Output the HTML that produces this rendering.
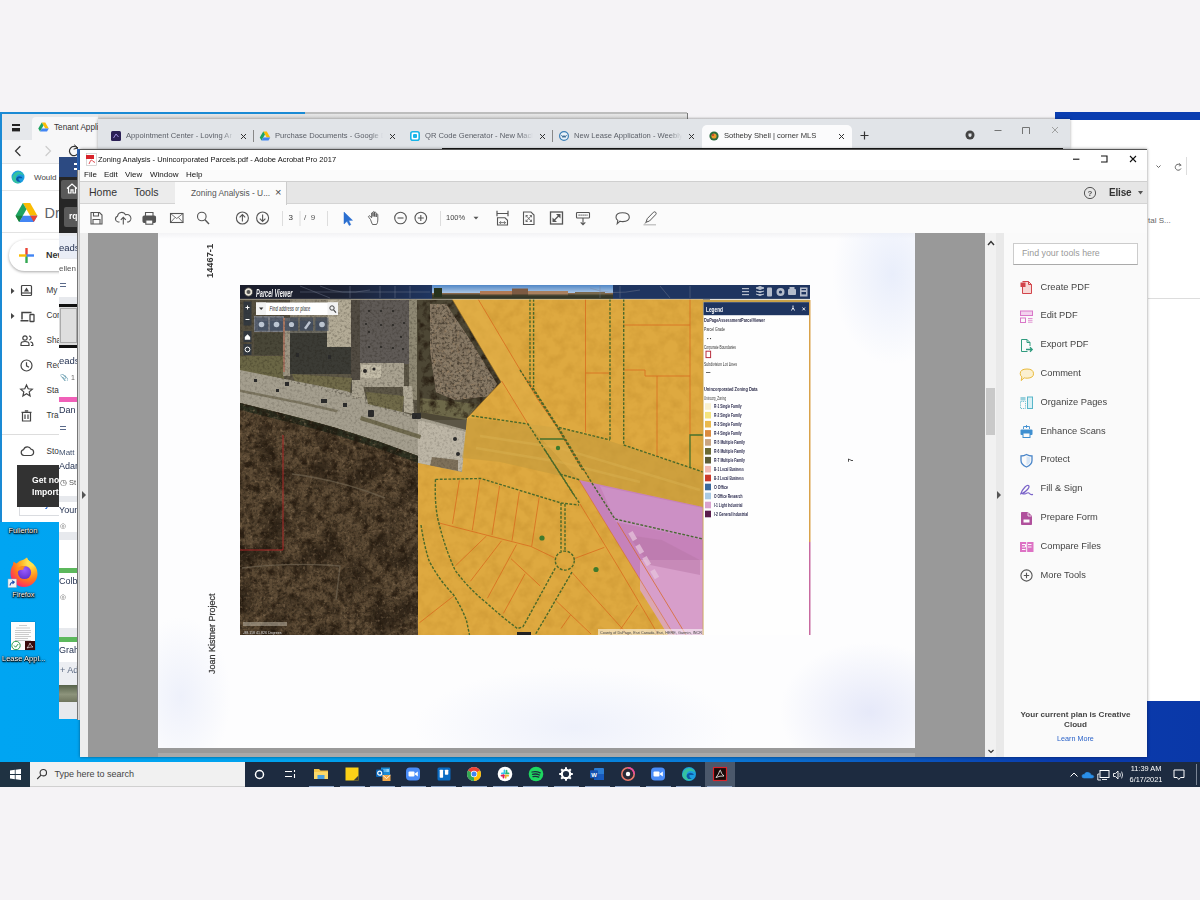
<!DOCTYPE html>
<html><head><meta charset="utf-8"><title>Zoning Analysis</title>
<style>
*{box-sizing:border-box;margin:0;padding:0}
html,body{width:1200px;height:900px;overflow:hidden;background:#f5f3f6;font-family:"Liberation Sans",sans-serif;}
.a{position:absolute}
.t{position:absolute;white-space:nowrap;line-height:1;color:#333}
svg{position:absolute;overflow:visible}
#wrap{position:absolute;left:0;top:0;width:1200px;height:900px;filter:blur(.45px)}
</style></head><body><div id="wrap">
<!-- DESKTOP -->
<div class="a" id="desk" style="left:0;top:112px;width:1200px;height:651px;background:linear-gradient(90deg,#00a5f2 0%,#00a2ee 25%,#0a78d6 60%,#0a3cae 88%,#0a38a8 100%)"></div>

<!-- desktop icons -->
<div class="t" style="left:8.5px;top:527px;font-size:7.4px;color:#fff;text-shadow:0 0 1px #000,0 1px 1px #000,1px 1px 2px #000,0 0 2px #000">Fullerton</div>
<svg style="left:8px;top:557px" width="32" height="32" viewBox="0 0 32 32"><defs><radialGradient id="ffg" cx=".72" cy=".18" r=".95"><stop offset="0" stop-color="#fff36a"/><stop offset=".3" stop-color="#ffbd2a"/><stop offset=".6" stop-color="#ff7a1c"/><stop offset=".85" stop-color="#ff3a55"/><stop offset="1" stop-color="#e31587"/></radialGradient><radialGradient id="ffp" cx=".5" cy=".3" r=".8"><stop offset="0" stop-color="#9a5cff"/><stop offset="1" stop-color="#5a2ac8"/></radialGradient></defs><path d="M16 2.500 Q18 1 19 0.500 Q19.500 3 22 4.500 Q29.500 9 29.500 16.500 A13.500 13.500 0 0 1 2.500 16.500 Q2.500 11 5 8 Q5 5.500 5.800 4.500 Q7 6.200 8.500 6.500 Q11 3.500 16 2.500Z" fill="url(#ffg)"/><circle cx="16.500" cy="15.500" r="6.600" fill="url(#ffp)"/><path d="M8.500 12.500 Q11.500 8 17.500 9.200 Q14.800 10.600 15.300 13 Q12 12 9.500 14.500 Q8.500 13.500 8.500 12.500Z" fill="#ff8a1c"/><path d="M19 0.500 Q19.500 3 22 4.500 Q25.500 7 26.500 10 Q23.500 7.500 20.500 8 Q20.500 4 19 0.500Z" fill="#ffe14a"/><rect x="0" y="22" width="8.500" height="8.500" fill="#f4f4f4" stroke="#9ab" stroke-width=".5"/><path d="M2 28.500 Q2.500 25 6 25 M4 23.600 L6.300 25 L4.500 27" stroke="#1a4ab0" stroke-width="1.100" fill="none"/></svg>
<div class="t" style="left:12.3px;top:591px;font-size:7.2px;color:#fff;text-shadow:0 0 1px #000,0 1px 1px #000,1px 1px 2px #000,0 0 2px #000">Firefox</div>
<div class="a" style="left:11px;top:622px;width:24px;height:28px;background:#fdfdfd;box-shadow:0 0 1px rgba(0,0,0,.5)"></div>
<svg style="left:11px;top:622px" width="24" height="28" viewBox="0 0 24 28"><g stroke="#999" stroke-width=".5"><path d="M8 3.500 H16 M5 6 H19 M4 8.500 H20 M4 10.500 H20 M4 12.500 H18 M4 14.500 H20 M4 16.500 H17 M4 18.500 H20"/></g><circle cx="5" cy="23.500" r="4.200" fill="#fff" stroke="#2a9a4a" stroke-width="1"/><path d="M3 23.500 L4.600 25.200 L7.200 22" stroke="#2a9a4a" stroke-width="1" fill="none"/><rect x="14" y="19" width="10" height="9" fill="#3a0a0a"/><path d="M16 26 Q18.500 23 19 21 Q19.500 23.500 22 25 Q19 24.800 16 26Z" stroke="#fff" stroke-width=".6" fill="none"/></svg>
<div class="t" style="left:2px;top:654.5px;font-size:7.5px;color:#fff;text-shadow:0 0 1px #000,0 1px 1px #000,1px 1px 2px #000,0 0 2px #000">Lease Appl...</div>
<div class="a" style="left:687px;top:112px;width:368px;height:8px;background:linear-gradient(#f5f3f6 60%,#d8d8da)"></div>
<div class="a" style="left:687px;top:113px;width:1px;height:6px;background:#777"></div>
<!-- RIGHT WINDOW -->
<div class="a" style="left:1055px;top:112px;width:145px;height:8px;background:#0a3db0"></div>
<div class="a" style="left:1070px;top:120px;width:130px;height:581px;background:#fff"></div>
<div class="a" style="left:1148px;top:298px;width:52px;height:1px;background:#ddd"></div>
<div class="a" style="left:1186px;top:157px;width:1px;height:18px;background:#ddd"></div>
<div class="t" style="left:1148px;top:217px;font-size:8px;color:#666">tal S...</div>
<svg style="left:1154px;top:162px" width="30" height="10" viewBox="0 0 30 10"><path d="M2.5 3.5 L4.5 5.5 L6.5 3.5" stroke="#666" stroke-width="1" fill="none"/><path d="M26.5 3.2 A3 3 0 1 0 27 6.5" stroke="#666" stroke-width="1" fill="none"/><path d="M25 1.2 L27.2 3.2 L24.8 4" stroke="#666" stroke-width=".8" fill="none"/></svg>

<!-- EDGE WINDOW (Drive) -->
<div class="a" id="edge" style="left:0;top:112px;width:687px;height:410px;background:#fff;border-left:2px solid #1a8ad4"></div>
<div class="a" style="left:0;top:112px;width:305px;height:1.5px;background:#1a8ad4"></div>
<div class="a" style="left:305px;top:112px;width:382px;height:1.5px;background:#bdbdbd"></div>
<div class="a" style="left:2px;top:113.5px;width:685px;height:26px;background:#e6e8eb"></div>
<div class="a" style="left:32px;top:117px;width:68px;height:23px;background:#f7f7f8;border-radius:4px 4px 0 0"></div>
<svg style="left:10px;top:122px" width="12" height="12" viewBox="0 0 12 12"><rect x="2" y="2" width="8" height="2" fill="#222"/><rect x="2" y="6" width="8" height="3.4" fill="#222"/></svg>
<svg style="left:38px;top:122px" width="11" height="10" viewBox="0 0 22 20"><path d="M7.5 1 H14.5 L21.5 13 H14.5Z" fill="#fbbc04"/><path d="M7.5 1 L0.5 13 L4 19 L11 7Z" fill="#1ea362"/><path d="M4 19 H18 L21.5 13 H7.5Z" fill="#4285f4"/></svg>
<div class="t" style="left:54px;top:124px;font-size:8.2px;color:#333">Tenant Applic</div>
<div class="a" style="left:2px;top:139.5px;width:100px;height:24px;background:#f7f7f8"></div>
<svg style="left:10px;top:142px" width="75" height="18" viewBox="0 0 75 18" fill="none" stroke-linecap="round"><path d="M10 4.5 L5.5 9 L10 13.5" stroke="#333" stroke-width="1.2"/><path d="M36 4.5 L40.5 9 L36 13.5" stroke="#ccc" stroke-width="1.2"/><path d="M67.5 6 A4.6 4.6 0 1 0 68.2 11" stroke="#333" stroke-width="1.2"/><path d="M64.5 3 L68 6 L64 7" stroke="#333" stroke-width="1"/></svg>
<div class="a" style="left:2px;top:163px;width:100px;height:1px;background:#e2e2e2"></div>
<svg style="left:11px;top:170px" width="14" height="14" viewBox="0 0 14 14"><circle cx="7" cy="7" r="6.5" fill="#1b9de2"/><path d="M1 8 Q2 2.5 7.5 1.5 Q12 2 13.2 6 Q11 3.6 7.5 4.6 Q4.5 6 5 9.5 Q6 12.8 10.5 12 Q5 15 1.6 10.5Z" fill="#35c1a0"/><path d="M5 9.5 Q5.2 6.5 8.5 6.2 Q11 6.4 11.6 8.2 H7.4 Q7 10.5 9.6 11.6 Q6 12.6 5 9.5Z" fill="#0c59a4"/></svg>
<div class="t" style="left:34px;top:173.5px;font-size:8px;color:#444">Would</div>
<div class="a" style="left:2px;top:190px;width:100px;height:1px;background:#e6e6e6"></div>
<svg style="left:15px;top:202px" width="23" height="21" viewBox="0 0 22 20"><path d="M7.5 1 H14.5 L21.5 13 H14.5Z" fill="#fbbc04"/><path d="M7.5 1 L0.5 13 L4 19 L11 7Z" fill="#1ea362"/><path d="M4 19 H18 L21.5 13 H7.5Z" fill="#4285f4"/><path d="M11 7 L7.5 13 H14.5Z" fill="#fff" opacity=".0"/><path d="M4 19 L7.5 13 L0.5 13Z" fill="#188038"/><path d="M18 19 L21.5 13 H14.5Z" fill="#ea4335"/></svg>
<div class="t" style="left:44.5px;top:205.5px;font-size:14.5px;color:#5f6368">Dr</div>
<div class="a" style="left:2px;top:232px;width:100px;height:1px;background:#e2e2e2"></div>
<div class="a" style="left:8.5px;top:240px;width:80px;height:31px;background:#fff;border-radius:16px;box-shadow:0 1px 3px rgba(0,0,0,.35)"></div>
<svg style="left:18.5px;top:248px" width="15" height="15" viewBox="0 0 15 15"><rect x="6.3" y="0" width="2.4" height="7.5" fill="#ea4335"/><rect x="6.3" y="7.5" width="2.4" height="7.5" fill="#34a853"/><rect x="0" y="6.3" width="7.5" height="2.4" fill="#fbbc04"/><rect x="7.5" y="6.3" width="7.5" height="2.4" fill="#4285f4"/></svg>
<div class="t" style="left:46px;top:251px;font-size:9px;color:#333;font-weight:bold">New</div>
<svg style="left:19.5px;top:284.0px" width="15" height="13" viewBox="0 0 15 13" fill="none" stroke="#444" stroke-width="1.2"><rect x="1.5" y="1.5" width="10" height="10" rx="1"/><path d="M1.5 9 H11.5" /><path d="M6.5 3.5 L9 7.5 H4Z" fill="#444" stroke="none"/></svg>
<svg style="left:10.5px;top:287.5px" width="4" height="6" viewBox="0 0 4 6"><path d="M0 0 L3.5 3 L0 6Z" fill="#444"/></svg>
<div class="t" style="left:46.5px;top:286.5px;font-size:8.2px;color:#333">My</div>
<svg style="left:19.5px;top:309.5px" width="15" height="13" viewBox="0 0 15 13" fill="none" stroke="#444" stroke-width="1.2"><path d="M2 9.5 V2.5 H11.5 M0.5 10.8 H8.5" stroke-width="1.5"/><rect x="10" y="4.5" width="4" height="7" rx=".6" stroke-width="1.3"/></svg>
<svg style="left:10.5px;top:313.0px" width="4" height="6" viewBox="0 0 4 6"><path d="M0 0 L3.5 3 L0 6Z" fill="#444"/></svg>
<div class="t" style="left:46.5px;top:312.0px;font-size:8.2px;color:#333">Com</div>
<svg style="left:19.5px;top:334.1px" width="15" height="13" viewBox="0 0 15 13" fill="none" stroke="#444" stroke-width="1.2"><circle cx="5" cy="4" r="2.2"/><path d="M1 11.5 V10 Q1 7.5 5 7.5 Q9 7.5 9 10 V11.5Z"/><path d="M9 2 Q11.2 2.4 11 4.2 Q10.8 5.8 9 6 M10.5 7.8 Q12.8 8.3 12.8 10 V11.5 H11"/></svg>
<div class="t" style="left:46.5px;top:336.6px;font-size:8.2px;color:#333">Sha</div>
<svg style="left:19.5px;top:359.2px" width="15" height="13" viewBox="0 0 15 13" fill="none" stroke="#444" stroke-width="1.2"><circle cx="6.5" cy="6.5" r="5.5"/><path d="M6.5 3.2 V6.8 L9 8.3"/></svg>
<div class="t" style="left:46.5px;top:361.7px;font-size:8.2px;color:#333">Rec</div>
<svg style="left:19.5px;top:384.2px" width="15" height="13" viewBox="0 0 15 13" fill="none" stroke="#444" stroke-width="1.2"><path d="M6.5 1 L8.2 4.8 L12.3 5.2 L9.2 7.9 L10.1 12 L6.5 9.8 L2.9 12 L3.8 7.9 L0.7 5.2 L4.8 4.8Z"/></svg>
<div class="t" style="left:46.5px;top:386.7px;font-size:8.2px;color:#333">Sta</div>
<svg style="left:19.5px;top:409.0px" width="15" height="13" viewBox="0 0 15 13" fill="none" stroke="#444" stroke-width="1.2"><path d="M2.5 3.5 H10.5 V12 H2.5Z M1.5 3.3 H11.5 M4.8 1.8 H8.2 M5 5.5 V10 M8 5.5 V10" /></svg>
<div class="t" style="left:46.5px;top:411.5px;font-size:8.2px;color:#333">Tra</div>
<svg style="left:19.5px;top:445.3px" width="15" height="13" viewBox="0 0 15 13" fill="none" stroke="#444" stroke-width="1.2"><path d="M3.8 10.5 A3 3 0 0 1 3.6 4.6 A4 4 0 0 1 11 4.2 A3.2 3.2 0 0 1 11 10.5Z"/></svg>
<div class="t" style="left:46.5px;top:447.8px;font-size:8.2px;color:#333">Sto</div>

<div class="a" style="left:2px;top:433.5px;width:60px;height:1px;background:#ddd"></div>
<div class="a" style="left:19px;top:503px;width:45px;height:13px;border:1px solid #dadce0;background:#fff"></div>
<div class="t" style="left:34px;top:501px;font-size:8px;color:#1a5fd0;font-weight:bold">Buy s</div>
<div class="a" style="left:17px;top:465px;width:45px;height:41.5px;background:#323232"></div>
<div class="t" style="left:32px;top:475.5px;font-size:8.6px;color:#fff;font-weight:bold">Get noti</div>
<div class="t" style="left:32px;top:487.5px;font-size:8.6px;color:#fff;font-weight:bold">Importa</div>
<!-- CHROME WINDOW -->
<div class="a" style="left:98px;top:113.5px;width:589px;height:6px;background:linear-gradient(#e6e6e6,#d2d2d2)"></div>
<div class="a" id="chrome" style="left:98px;top:119px;width:972px;height:30px;background:#e1e4e8;box-shadow:0 0 3px rgba(0,0,0,.35)"></div>
<div class="a" style="left:702px;top:125px;width:150px;height:24px;background:#fbfbfc;border-radius:5px 5px 0 0"></div>
<div class="a" style="left:442px;top:147.5px;width:621px;height:2px;background:#1a1a1a"></div>
<svg style="left:111px;top:131px" width="10" height="10" viewBox="0 0 10 10"><rect x="0" y="0" width="10" height="10" rx="1.5" fill="#2a1f55"/><path d="M2.5 7 L5 3 L7.5 6" stroke="#b9a7ff" stroke-width=".8" fill="none"/></svg>
<div class="t" style="left:126px;top:132px;font-size:7.6px;color:#5a5e66;width:108px;overflow:hidden;-webkit-mask-image:linear-gradient(90deg,#000 88%,transparent)">Appointment Center - Loving Ar</div>
<svg style="left:239.5px;top:132.5px" width="7" height="7" viewBox="0 0 7 7"><path d="M1 1 L6 6 M6 1 L1 6" stroke="#333" stroke-width="1"/></svg>
<div class="a" style="left:253px;top:130px;width:1px;height:12px;background:#888"></div>
<svg style="left:260px;top:131px" width="10" height="10" viewBox="0 0 10 10"><g transform="scale(.5) translate(-1,0)"><path d="M7.5 1 H14.5 L21.5 13 H14.5Z" fill="#fbbc04"/><path d="M7.5 1 L0.5 13 L4 19 L11 7Z" fill="#1ea362"/><path d="M4 19 H18 L21.5 13 H7.5Z" fill="#4285f4"/></g></svg>
<div class="t" style="left:275px;top:132px;font-size:7.6px;color:#5a5e66;width:108px;overflow:hidden;-webkit-mask-image:linear-gradient(90deg,#000 88%,transparent)">Purchase Documents - Google D</div>
<svg style="left:388.5px;top:132.5px" width="7" height="7" viewBox="0 0 7 7"><path d="M1 1 L6 6 M6 1 L1 6" stroke="#333" stroke-width="1"/></svg>
<svg style="left:410px;top:131px" width="10" height="10" viewBox="0 0 10 10"><rect x=".8" y=".8" width="8.4" height="8.4" rx="2" fill="#fff" stroke="#18b4e8" stroke-width="1.6"/><rect x="3" y="3" width="4" height="4" rx="1" fill="#18b4e8"/></svg>
<div class="t" style="left:425px;top:132px;font-size:7.6px;color:#5a5e66;width:108px;overflow:hidden;-webkit-mask-image:linear-gradient(90deg,#000 88%,transparent)">QR Code Generator - New Mach</div>
<svg style="left:538.5px;top:132.5px" width="7" height="7" viewBox="0 0 7 7"><path d="M1 1 L6 6 M6 1 L1 6" stroke="#333" stroke-width="1"/></svg>
<div class="a" style="left:552px;top:130px;width:1px;height:12px;background:#888"></div>
<svg style="left:559px;top:131px" width="10" height="10" viewBox="0 0 10 10"><circle cx="5" cy="5" r="4.4" fill="#e8f2fa" stroke="#3c7fb5" stroke-width="1.2"/><path d="M2.5 4 L4 6.5 L5 4.5 L6 6.5 L7.5 4" stroke="#2b5f8a" stroke-width=".9" fill="none"/></svg>
<div class="t" style="left:574px;top:132px;font-size:7.6px;color:#5a5e66;width:108px;overflow:hidden;-webkit-mask-image:linear-gradient(90deg,#000 88%,transparent)">New Lease Application - Weebly</div>
<svg style="left:687.5px;top:132.5px" width="7" height="7" viewBox="0 0 7 7"><path d="M1 1 L6 6 M6 1 L1 6" stroke="#333" stroke-width="1"/></svg>
<svg style="left:709px;top:131px" width="10" height="10" viewBox="0 0 10 10"><circle cx="5" cy="5" r="4.6" fill="#2a6a3a"/><circle cx="5" cy="5" r="2.6" fill="#e89a2a"/><circle cx="4" cy="4" r="1" fill="#c0392b"/></svg>
<div class="t" style="left:724px;top:132px;font-size:7.6px;color:#333;width:108px;overflow:hidden;-webkit-mask-image:linear-gradient(90deg,#000 88%,transparent)">Sotheby Shell | corner MLS</div>
<svg style="left:837.5px;top:132.5px" width="7" height="7" viewBox="0 0 7 7"><path d="M1 1 L6 6 M6 1 L1 6" stroke="#333" stroke-width="1"/></svg>
<svg style="left:860px;top:131px" width="9" height="9" viewBox="0 0 9 9"><path d="M4.5 .5 V8.5 M.5 4.5 H8.5" stroke="#333" stroke-width="1.2"/></svg>
<svg style="left:965px;top:130px" width="10" height="10" viewBox="0 0 10 10"><circle cx="5" cy="5" r="4.5" fill="#444"/><path d="M3.5 3.5 H6.5 V6 L5 7.2 L3.5 6Z" fill="#e1e4e8"/></svg>
<svg style="left:990px;top:124px" width="72" height="12" viewBox="0 0 72 12" fill="none" stroke="#666" stroke-width=".9"><path d="M4.5 6.5 H11.5"/><path d="M32.5 10 V3.5 H39.5 V10"/><path d="M62 3 L68 9 M68 3 L62 9" stroke="#999"/></svg>
<!-- TRELLO WINDOW -->
<div class="a" id="trello" style="left:59px;top:157px;width:18px;height:562px;background:#f1f2f4"></div>
<div class="a" style="left:59px;top:157px;width:18px;height:20px;background:#2c4a82"></div>
<div class="a" style="left:73.5px;top:163px;width:3.5px;height:1.5px;background:#fff"></div><div class="a" style="left:73.5px;top:168px;width:3.5px;height:1.5px;background:#fff"></div>
<div class="a" style="left:59px;top:177px;width:18px;height:56px;background:#262626"></div>
<div class="a" style="left:61px;top:179.5px;width:16px;height:19px;background:#595959;border-radius:2px 0 0 2px"></div>
<svg style="left:65.5px;top:183px" width="12" height="11" viewBox="0 0 12 11"><path d="M1 5.5 L6 1 L11 5.5 M2.5 4.5 V10 H5 V6.8 H7 V10 H9.5 V4.5" stroke="#fff" stroke-width="1.2" fill="none"/></svg>
<div class="a" style="left:63.5px;top:207px;width:14px;height:20px;background:#595959;border-radius:2px 0 0 2px"></div>
<div class="t" style="left:69px;top:212px;font-size:8.5px;color:#fff;font-weight:bold">rq</div>
<div class="a" style="left:59px;top:233px;width:18px;height:486px;background:#e7e9ed"></div>
<div class="a" style="left:59px;top:236.0px;width:18px;height:22.0px;background:#e9edf5"></div>
<div class="t" style="left:59px;top:242.5px;font-size:9.5px;color:#1f2d4d;width:18px;overflow:hidden">eads</div>
<div class="a" style="left:59px;top:259.0px;width:18px;height:38.0px;background:#fff"></div>
<div class="t" style="left:59px;top:264.5px;font-size:8.0px;color:#555;width:18px;overflow:hidden">ellen</div>
<div class="a" style="left:60px;top:283px;width:6px;height:1px;background:#5a6a8a"></div><div class="a" style="left:60px;top:285.5px;width:6px;height:1px;background:#5a6a8a"></div><div class="a" style="left:59px;top:303.5px;width:18px;height:3.0px;background:#111"></div>
<div class="a" style="left:59px;top:306.5px;width:18px;height:38.0px;background:#dcdcdc"></div>
<div class="a" style="left:59.5px;top:308px;width:17px;height:35px;border:1.5px solid #aaa;background:#dedede"></div><div class="a" style="left:59px;top:344.5px;width:18px;height:3.5px;background:#111"></div>
<div class="a" style="left:59px;top:348.0px;width:18px;height:50.0px;background:#fff"></div>
<div class="t" style="left:59px;top:356.0px;font-size:9.5px;color:#1f2d4d;width:18px;overflow:hidden">eads</div>
<div class="t" style="left:60px;top:373.5px;font-size:7.0px;color:#666;width:17px;overflow:hidden">&#128206; 1</div>
<div class="a" style="left:59px;top:397.0px;width:18px;height:5.0px;background:#f060b8"></div>
<div class="a" style="left:59px;top:402.0px;width:18px;height:45.0px;background:#fff"></div>
<div class="t" style="left:59px;top:405.5px;font-size:9.0px;color:#1f2d4d;width:18px;overflow:hidden">Dan X</div>
<div class="a" style="left:60px;top:426px;width:6px;height:1px;background:#5a6a8a"></div><div class="a" style="left:60px;top:428.5px;width:6px;height:1px;background:#5a6a8a"></div><div class="a" style="left:59px;top:446.0px;width:18px;height:50.0px;background:#fff"></div>
<div class="t" style="left:59px;top:449.0px;font-size:8.0px;color:#44546f;width:18px;overflow:hidden">Matt</div>
<div class="t" style="left:59px;top:461.5px;font-size:9.0px;color:#1f2d4d;width:18px;overflow:hidden">Adam</div>
<div class="t" style="left:60px;top:478.5px;font-size:7.5px;color:#555;width:17px;overflow:hidden">&#9719; St</div>
<div class="a" style="left:59px;top:502.0px;width:18px;height:30.0px;background:#fff"></div>
<div class="t" style="left:59px;top:506.0px;font-size:9.0px;color:#1f2d4d;width:18px;overflow:hidden">Young</div>
<div class="t" style="left:60px;top:522.0px;font-size:7.0px;color:#666;width:17px;overflow:hidden">&#9678;</div>
<div class="a" style="left:59px;top:540.0px;width:18px;height:30.0px;background:#fff"></div>
<div class="a" style="left:59px;top:568.0px;width:18px;height:4.5px;background:#5cb85c"></div>
<div class="a" style="left:59px;top:572.5px;width:18px;height:55.0px;background:#fff"></div>
<div class="t" style="left:59px;top:576.5px;font-size:9.0px;color:#1f2d4d;width:18px;overflow:hidden">Colbr</div>
<div class="t" style="left:60px;top:593.0px;font-size:7.0px;color:#666;width:17px;overflow:hidden">&#9678;</div>
<div class="a" style="left:59px;top:637.0px;width:18px;height:4.5px;background:#5cb85c"></div>
<div class="a" style="left:59px;top:641.5px;width:18px;height:20.0px;background:#fff"></div>
<div class="t" style="left:59px;top:646.0px;font-size:9.0px;color:#1f2d4d;width:18px;overflow:hidden">Graha</div>
<div class="a" style="left:59px;top:661.5px;width:18px;height:23.0px;background:#eceef2"></div>
<div class="t" style="left:60px;top:666.0px;font-size:9.0px;color:#5e6c84;width:17px;overflow:hidden">+ Ad</div>
<div class="a" style="left:59px;top:685px;width:18px;height:17px;background:linear-gradient(#56624a,#8d947c 55%,#6f755e)"></div>

<!-- ACROBAT WINDOW -->
<div class="a" style="left:77px;top:149px;width:3px;height:21px;background:#2c62b4"></div>
<div class="a" style="left:76.5px;top:170px;width:3.5px;height:550px;background:#ececec;border-left:1px solid #7a7a7a"></div>
<div class="a" id="acro" style="left:80px;top:149px;width:1067px;height:608px;background:#fbfbfb;border-top:1px solid #555;box-shadow:0 0 3px rgba(0,0,0,.45)"></div>
<div class="a" style="left:80px;top:150px;width:1067px;height:20px;background:#fff"></div>
<!-- title -->
<svg style="left:86px;top:153px" width="12" height="13" viewBox="0 0 12 13"><rect x=".5" y=".5" width="10" height="12" fill="#fff" stroke="#bbb" stroke-width=".6"/><rect x="0" y="2" width="8" height="4" fill="#d8232a"/><path d="M3 11 Q5 6 5.5 7 T9 9.5" stroke="#d8232a" stroke-width=".8" fill="none"/></svg>
<div class="t" style="left:98px;top:156px;font-size:7.5px;color:#111">Zoning Analysis - Unincorporated Parcels.pdf - Adobe Acrobat Pro 2017</div>
<svg style="left:1070px;top:152px" width="70" height="14" viewBox="0 0 70 14"><path d="M3 7.2 H9.4" stroke="#111" stroke-width="1.1"/><path d="M31 4 H37 V10 H31" stroke="#111" stroke-width="1.1" fill="none"/><path d="M60 4 L66 10 M66 4 L60 10" stroke="#111" stroke-width="1.1"/></svg>
<!-- menu -->
<div class="t" style="left:84px;top:171px;font-size:8px;color:#111">File</div>
<div class="t" style="left:104px;top:171px;font-size:8px;color:#111">Edit</div>
<div class="t" style="left:125px;top:171px;font-size:8px;color:#111">View</div>
<div class="t" style="left:150px;top:171px;font-size:8px;color:#111">Window</div>
<div class="t" style="left:186px;top:171px;font-size:8px;color:#111">Help</div>
<!-- tabs row -->
<div class="a" style="left:80px;top:181px;width:1067px;height:23px;background:#e6e6e6;border-top:1px solid #cfcfcf;border-bottom:1px solid #d4d4d4"></div>
<div class="a" style="left:80px;top:182px;width:95px;height:21px;background:#ececec"></div>
<div class="a" style="left:175px;top:182px;width:112px;height:23px;background:#fbfbfb;border-right:1px solid #ccc"></div>
<div class="t" style="left:89px;top:187px;font-size:10.5px;color:#333">Home</div>
<div class="t" style="left:134px;top:187px;font-size:10.5px;color:#333">Tools</div>
<div class="t" style="left:191px;top:188.5px;font-size:8.4px;color:#555">Zoning Analysis - U...</div>
<div class="t" style="left:275px;top:187px;font-size:11px;color:#444">×</div>
<svg style="left:1083px;top:186px" width="14" height="14" viewBox="0 0 14 14"><circle cx="7" cy="7" r="5.6" fill="none" stroke="#555" stroke-width="1"/><text x="7" y="10" font-size="8" font-weight="bold" text-anchor="middle" fill="#555" font-family="Liberation Sans, sans-serif">?</text></svg>
<div class="t" style="left:1109px;top:188px;font-size:10px;color:#333;font-weight:bold;letter-spacing:-.2px">Elise</div>
<svg style="left:1138px;top:191px" width="5" height="4" viewBox="0 0 5 4"><path d="M0 0 H5 L2.5 3.5Z" fill="#555"/></svg>
<!-- toolbar -->
<div class="a" style="left:80px;top:205px;width:1067px;height:28px;background:#fbfbfb"></div>
<svg style="left:80px;top:205px" width="620" height="28" viewBox="80 205 620 28" fill="none" stroke="#555" stroke-width="1.1">
<!-- save -->
<path d="M91 212.5 H99.5 L102 215 V224 H91Z"/><path d="M93.5 212.5 V216 H98.5 V212.5 M93 224 V219.5 H100 V224"/>
<!-- upload cloud -->
<path d="M119.5 222 H118 A3 3 0 0 1 117.5 216.2 A4.2 4.2 0 0 1 125.5 214.8 A3.6 3.6 0 0 1 128.5 222 H127"/><path d="M123.3 224.5 V217.5 M120.8 219.8 L123.3 217.3 L125.8 219.8"/>
<!-- print -->
<rect x="143" y="216" width="12.5" height="6.5" rx="1.2" fill="#555"/><path d="M145.5 216 V212.5 H153 V216" /><rect x="145.8" y="220" width="7" height="4.2" fill="#fbfbfb"/>
<!-- mail -->
<rect x="170.5" y="213.5" width="12.5" height="9"/><path d="M170.5 213.5 L176.7 218.5 L183 213.5 M170.5 222.5 L175 217.5 M183 222.5 L178.5 217.5" stroke-width=".8"/>
<!-- search -->
<circle cx="201.8" cy="216.5" r="4.3"/><path d="M205 219.8 L209 224" stroke-width="1.4"/>
<!-- up/down -->
<circle cx="242.4" cy="218" r="6"/><path d="M242.4 221.5 V214.8 M239.6 217.4 L242.4 214.6 L245.2 217.4"/>
<circle cx="262.6" cy="218" r="6"/><path d="M262.6 214.5 V221.2 M259.8 218.6 L262.6 221.4 L265.4 218.6"/>
<path d="M282.5 211 V226 M300 211 V226 M327.5 211 V226" stroke="#ddd" stroke-width="1"/>
<!-- pointer -->
<path d="M344 212 V224 L347 221.3 L349.2 225.5 L350.8 224.7 L348.7 220.6 L352.5 220.3Z" fill="#2b6fd0" stroke="#2b6fd0" stroke-width=".5"/>
<!-- hand -->
<path d="M370.5 219.5 L368.8 217.3 Q368 216.3 369 215.8 Q369.8 215.6 370.6 216.6 L371.6 217.8 V213 Q372.3 212 373 213 V216.5 V212 Q373.8 211 374.6 212 V216.5 V212.6 Q375.4 211.8 376.2 212.8 V217 V214.2 Q377.1 213.5 377.8 214.4 V220 Q377.8 223 376.5 224.5 H372.5 Q371.3 222 370.5 219.5Z" stroke-width=".9"/>
<!-- zoom -->
<circle cx="400.5" cy="218" r="5.8"/><path d="M397.5 218 H403.5"/>
<circle cx="420.8" cy="218" r="5.8"/><path d="M417.8 218 H423.8 M420.8 215 V221"/>
<path d="M440.5 211 V226" stroke="#ddd" stroke-width="1"/>
<path d="M473.5 216.8 H478.5 L476 219.6Z" fill="#555" stroke="none"/>
<!-- fit width -->
<path d="M497 210.8 V216.2 M508 210.8 V216.2 M497 213.5 H508" stroke-width="1.2"/><path d="M497.5 217.8 H505 L507.5 220.3 V225 H497.5Z" stroke-width="1.1"/><path d="M499.5 222.6 H505.5 M500.9 221.2 L499.5 222.6 L500.9 224 M504.1 221.2 L505.5 222.6 L504.1 224" stroke-width=".8"/>
<!-- fit page -->
<path d="M523.5 212 H531 L534 215 V224.5 H523.5Z" stroke-width="1.1"/><path d="M526 215.5 L531.5 221.500 M531.5 215.5 L526 221.500 M526 217.300 V215.5 H527.800 M529.700 215.5 H531.5 V217.300 M526 219.700 V221.500 H527.800 M529.700 221.500 H531.5 V219.700" stroke-width=".8"/>
<!-- fullscreen -->
<rect x="550.5" y="212" width="12" height="12" stroke-width="1.3"/><path d="M553.5 221 L559.5 215" stroke-width="1.2"/><path d="M556 214 H560.5 V218.500Z M552.500 217.500 V222 H557Z" fill="#555" stroke="none"/>
<!-- keyboard/download -->
<rect x="576.5" y="212.5" width="13" height="5.5" rx=".8"/><path d="M578.5 215.2 H587.5" stroke-dasharray="1.2 .8" stroke-width="1.2"/><path d="M583 218 V224.5 M580.7 222.3 L583 224.6 L585.3 222.3"/>
<!-- comment -->
<path d="M622.5 212.8 Q629.3 212.8 629.3 217.3 Q629.3 221.5 622.8 221.6 Q621 221.6 620 221.2 L617.2 223.8 L617.8 220.4 Q616 219 616 217.2 Q616 212.8 622.5 212.8Z"/>
<!-- pen -->
<path d="M646 222.2 L647.3 218.6 L653.5 212.2 Q654.8 211.3 655.8 212.4 Q656.7 213.6 655.6 214.7 L649.5 221 Z M645 223.5 L646 222.2" stroke-width="1"/><path d="M643.5 224.8 H656" stroke="#bbb" stroke-width="1.2"/>
</svg>
<div class="t" style="left:288.5px;top:214px;font-size:8px;color:#333">3</div>
<div class="t" style="left:304px;top:214px;font-size:8px;color:#555">/ &nbsp;9</div>
<div class="t" style="left:446px;top:214px;font-size:7.5px;color:#444">100%</div>

<!-- content area -->
<div class="a" style="left:80px;top:233px;width:8px;height:524px;background:#ededed"></div>
<div class="a" style="left:88px;top:233px;width:897px;height:524px;background:#999"></div>
<div class="a" style="left:158px;top:752.5px;width:757px;height:4.5px;background:#a9a9a9"></div>
<div class="a" id="page" style="left:158px;top:233px;width:757px;height:515px;background:radial-gradient(ellipse 90px 70px at 94% 93%,#e6e9f9,rgba(230,233,249,0) 100%),radial-gradient(ellipse 60px 90px at 97% 8%,#e9eefb,rgba(233,238,251,0) 100%),radial-gradient(ellipse 160px 60px at 55% 96%,#eef1fb,rgba(238,241,251,0) 100%),radial-gradient(ellipse 50px 80px at 3% 90%,#eef1fb,rgba(238,241,251,0) 100%),linear-gradient(#f3f3f5 0,#fdfdfe 6px),#fdfdfe"></div>
<svg style="left:82px;top:491px" width="5" height="8" viewBox="0 0 5 8"><path d="M0 0 L4 4 L0 8Z" fill="#555"/></svg>
<div class="t" style="left:206px;top:277.5px;font-size:9.3px;font-weight:bold;color:#333;transform-origin:0 0;transform:rotate(-90deg)">14467-1</div>
<div class="t" style="left:207.5px;top:674px;font-size:9px;color:#3a3a3a;transform-origin:0 0;transform:rotate(-90deg);-webkit-text-stroke:.25px #3a3a3a">Joan Kistner Project</div>
<div class="t" style="left:848px;top:461.5px;font-size:6.5px;color:#333;font-weight:bold;transform-origin:0 0;transform:rotate(-90deg)">7</div>
<svg id="map" style="left:240px;top:285px" width="570" height="350" viewBox="240 285 570 350">
<defs>
<filter id="nzD" x="0" y="0" width="100%" height="100%" color-interpolation-filters="sRGB"><feTurbulence type="fractalNoise" baseFrequency="0.13" numOctaves="4" seed="4"/><feColorMatrix type="matrix" values="0 0 0 0 0.12  0 0 0 0 0.08  0 0 0 0 0.04  2.8 0 0 0 -1.2"/><feComposite in2="SourceGraphic" operator="in"/></filter>
<filter id="nzL" x="0" y="0" width="100%" height="100%" color-interpolation-filters="sRGB"><feTurbulence type="fractalNoise" baseFrequency="0.3" numOctaves="2" seed="11"/><feColorMatrix type="matrix" values="0 0 0 0 0.62  0 0 0 0 0.52  0 0 0 0 0.4  0 3 0 0 -1.7"/><feComposite in2="SourceGraphic" operator="in"/></filter>
<filter id="nzY" x="0" y="0" width="100%" height="100%" color-interpolation-filters="sRGB"><feTurbulence type="fractalNoise" baseFrequency="0.09" numOctaves="3" seed="7"/><feColorMatrix type="matrix" values="0 0 0 0 0.66  0 0 0 0 0.45  0 0 0 0 0.1  1.6 0 0 0 -0.62"/><feComposite in2="SourceGraphic" operator="in"/></filter>
<filter id="nzB" x="0" y="0" width="100%" height="100%" color-interpolation-filters="sRGB"><feTurbulence type="fractalNoise" baseFrequency="0.035" numOctaves="2" seed="21"/><feColorMatrix type="matrix" values="0 0 0 0 0.1  0 0 0 0 0.07  0 0 0 0 0.04  3 0 0 0 -1.35"/><feComposite in2="SourceGraphic" operator="in"/></filter>
<filter id="nzF" x="0" y="0" width="100%" height="100%" color-interpolation-filters="sRGB"><feTurbulence type="fractalNoise" baseFrequency="0.4" numOctaves="2" seed="9"/><feColorMatrix type="matrix" values="0 0 0 0 0.1  0 0 0 0 0.08  0 0 0 0 0.05  0 0 3 0 -1.35"/><feComposite in2="SourceGraphic" operator="in"/></filter>
<filter id="b1"><feGaussianBlur stdDeviation="0.7"/></filter>
<filter id="b2"><feGaussianBlur stdDeviation="1.6"/></filter>
<linearGradient id="hdl" x1="0" y1="0" x2="1" y2="0"><stop offset="0" stop-color="#1b1e2c"/><stop offset=".5" stop-color="#1c2132"/><stop offset="1" stop-color="#1f3560"/></linearGradient><linearGradient id="sky" x1="0" y1="0" x2="0" y2="1"><stop offset="0" stop-color="#4f86c6"/><stop offset=".55" stop-color="#a9c4e2"/><stop offset=".6" stop-color="#8a6a4e"/><stop offset="1" stop-color="#2e3322"/></linearGradient>
<clipPath id="mc"><rect x="240" y="285" width="570" height="350"/></clipPath>
</defs>
<g clip-path="url(#mc)">
<!-- aerial base -->
<rect x="240" y="299" width="470" height="336" fill="#5c5646"/>
<g filter="url(#b1)">
<!-- top-left block -->
<rect x="240" y="299" width="50" height="75" fill="#55503f"/>
<rect x="254" y="316" width="30" height="16" fill="#7d8087"/>
<rect x="254" y="333" width="30" height="22" fill="#4a4638"/>
<rect x="240" y="356" width="44" height="24" fill="#6b6645"/>
<rect x="283" y="318" width="7" height="58" fill="#9d9583"/>
<path d="M284 318 V372" stroke="#b04a35" stroke-width="1.2" opacity=".7"/>
<!-- parking & concrete -->
<rect x="290" y="316" width="62" height="18" fill="#6a675e"/>
<rect x="290" y="333" width="62" height="41" fill="#3b3a36"/>
<rect x="327" y="300" width="25" height="47" fill="#b3ab96"/>
<rect x="290" y="300" width="38" height="17" fill="#8d8674"/>
<rect x="351" y="300" width="9" height="90" fill="#514c43"/>
<path d="M292 374 L352 378 L350 392 L296 384Z" fill="#6f6a48"/>
<!-- building -->
<rect x="360" y="300" width="50" height="64" fill="#5e5a56"/>
<rect x="360" y="363" width="44" height="24" fill="#a9a290"/>
<rect x="361" y="365" width="20" height="13" fill="#c4bda9"/>
<rect x="409" y="300" width="8" height="100" fill="#8e8873"/>
<!-- brush area -->
<rect x="417" y="300" width="90" height="120" fill="#4d4636"/>
<path d="M430 304 L446 304 L470 340 L497 384 L490 396 L455 400 L436 392 L430 350Z" fill="#84735f"/>
<path d="M420 398 L478 404 L466 420 L420 412Z" fill="#6d6848"/>
<!-- road -->
<path d="M240 370 L300 382 L346 391 L411 415 L470 431 L470 474 L418 464 L418 456 L380 442 L336 428 L300 418 L240 403Z" fill="#a49e8e"/>
<path d="M418 420 L466 432 L466 472 L418 463Z" fill="#bdb6a6"/><path d="M432 457 L458 460 L458 471 L430 466Z" fill="#7d705a"/>
<path d="M240 389.5 L300 401.5 L338 410 L337 412.500 L300 404 L240 392Z" fill="#7b7560"/>
<path d="M361 416 L421 435 L420 439 L360 420Z" fill="#6f6a50"/>
<path d="M352 380 L362 380 L366 400 L352 398Z" fill="#aaa391"/>
<path d="M403 386 L412 386 L414 414 L404 412Z" fill="#b2ab98"/>
<path d="M366 392 L404 396 L402 412 L368 404Z" fill="#6f6a48"/>
<!-- forest -->
<path d="M240 403 L300 418 L336 428 L380 442 L418 456 L418 635 L240 635Z" fill="#5d4b36"/>
<path d="M240 403 L300 418 L336 428 L380 442 L418 456 L418 463 L380 449 L336 435 L300 425 L240 410Z" fill="#2f3222"/>
</g>
<!-- building vents -->
<g fill="#2a2826"><circle cx="369" cy="311" r="1.1"/><circle cx="381" cy="311" r="1.1"/><circle cx="393" cy="311" r="1.1"/><circle cx="366" cy="324" r="1.1"/><circle cx="381" cy="325" r="1.1"/><circle cx="393" cy="325" r="1.1"/><circle cx="404" cy="323" r="1.1"/><circle cx="369" cy="332" r="1.1"/><circle cx="401" cy="337" r="1.1"/><circle cx="369" cy="347" r="1.1"/><circle cx="381" cy="347" r="1.1"/><circle cx="393" cy="348" r="1.1"/><circle cx="403" cy="349" r="1.1"/><circle cx="365" cy="371" r="2"/><circle cx="374" cy="369" r="1.6"/></g>
<g fill="#2b2b2b"><rect x="412" y="413" width="9" height="6" rx="1"/><rect x="368" y="410" width="6" height="7" rx="1"/><rect x="321" y="399" width="6" height="4"/><rect x="343" y="403" width="4" height="4"/><rect x="285" y="382" width="4" height="4"/><rect x="276" y="389" width="3" height="3"/><rect x="254" y="379" width="3" height="3"/><circle cx="455" cy="439" r="2"/><circle cx="458" cy="454" r="2"/><rect x="296" y="353" width="3" height="4"/><rect x="328" y="355" width="3" height="4"/></g>
<!-- noise on forest & brush -->
<path d="M240 403 L300 418 L336 428 L380 442 L418 456 L418 635 L240 635Z" fill="#000" filter="url(#nzB)" opacity=".6"/>
<path d="M240 403 L300 418 L336 428 L380 442 L418 456 L418 635 L240 635Z" fill="#000" filter="url(#nzD)" opacity=".75"/>
<path d="M240 403 L300 418 L336 428 L380 442 L418 456 L418 635 L240 635Z" fill="#000" filter="url(#nzL)" opacity=".5"/>
<path d="M240 403 L300 418 L336 428 L380 442 L418 456 L418 635 L240 635Z" fill="#000" filter="url(#nzF)" opacity=".45"/>
<path d="M417 300 H452 L501 382 L467 418 L420 412Z" fill="#000" filter="url(#nzD)" opacity=".8"/>
<path d="M430 304 L446 304 L470 340 L497 384 L490 396 L455 400 L436 392 L430 350Z" fill="#8a7b68" opacity=".8" filter="url(#b1)"/>
<path d="M430 304 L446 304 L470 340 L497 384 L490 396 L455 400 L436 392 L430 350Z" fill="#000" filter="url(#nzL)" opacity=".8"/>
<path d="M430 304 L446 304 L470 340 L497 384 L490 396 L455 400 L436 392 L430 350Z" fill="#000" filter="url(#nzF)" opacity=".5"/>
<path d="M240 299 H417 V420 L350 398 L240 368Z" fill="#000" filter="url(#nzF)" opacity=".25"/>
<path d="M240 370 L300 382 L346 391 L411 415 L470 431 L470 474 L418 464 L418 456 L380 442 L336 428 L300 418 L240 403Z" fill="#000" filter="url(#nzF)" opacity=".15"/>
<!-- forest paths / red line -->
<path d="M292 474 Q340 480 385 498" stroke="#6f624f" stroke-width="1.6" fill="none" opacity=".7"/>
<path d="M242 568 Q290 562 340 566 L336 600" stroke="#766a58" stroke-width="1.4" fill="none" opacity=".6"/>
<path d="M283 435 V550 H240" stroke="#c0282a" stroke-width="1" fill="none" opacity=".85"/>
<!-- yellow zone -->
<path id="yz" d="M452 299 L501 382 L467 418 L462 472 L418 463 L418 635 L703 635 L703 299Z" fill="#dea940"/>
<path d="M452 299 L501 382 L467 418 L462 472 L418 463 L418 635 L703 635 L703 299Z" fill="#000" filter="url(#nzY)" opacity=".3"/>
<path d="M468 418 L528 424 L560 428 L610 441 L690 468 L703 472 L703 507 L579 480 L500 462 L462 458Z" fill="#c29a3c" opacity=".55" filter="url(#b1)"/><path d="M480 436 L560 448 L700 490 M476 448 L560 462 L640 482" stroke="#d8b050" stroke-width="2.5" fill="none" opacity=".5" filter="url(#b1)"/><path d="M452 299 L478 299 L538 400 L590 480 L579 480 L528 424 L501 382Z" fill="#e2b24c" opacity=".45"/>
<path d="M452 299 L501 382 L467 418" stroke="#7a5a20" stroke-width="1" fill="none" opacity=".6"/>
<!-- pink zone -->
<path d="M579 480 L703 507 L703 635 L674 635Z" fill="#c682ba"/>
<path d="M640 560 H703 V635 H668 L640 590Z" fill="#dca6cf" opacity=".8" filter="url(#b1)"/>
<path d="M616 522 L703 540 L703 508 L600 486Z" fill="#cf96ca" opacity=".7"/>
<path d="M628 535 L662 540 L700 560 L700 575 L650 565Z" fill="#b878a8" opacity=".5" filter="url(#b1)"/>
<g fill="#e6c4dc" opacity=".75"><rect x="630" y="532" width="5" height="9" transform="rotate(-30 632 536)"/><rect x="637" y="545" width="5" height="9" transform="rotate(-30 639 549)"/><rect x="644" y="557" width="5" height="9" transform="rotate(-30 646 561)"/><rect x="652" y="570" width="5" height="9" transform="rotate(-30 654 574)"/></g>
<!-- orange parcel lines -->
<g stroke="#d8651c" stroke-width=".8" fill="none" opacity=".9">
<path d="M478 299 L538 400 L557.5 427.5 L582.5 470"/>
<path d="M501.7 381 L528 424"/>
<path d="M528 380 L590 480"/>
<path d="M585.5 299 V432.5 M585.5 373 H610"/>
<path d="M690 299 V435 M623.7 325 H690 M623.7 370 H645 V376 H690 M657 376 V456"/>
<path d="M459.4 480.4 L452.5 523.8 M479.8 480 L472.3 530.4 M499.6 486 L492 535 M519.4 491.7 L512 540.8 M539.2 497.4 L531.7 546.4"/>
<path d="M438.3 522.8 L530.8 546.4 L554.3 557.7"/>
<path d="M486.4 536 L455.3 566 M501.5 540.8 L470.4 581.3 M516.6 544.5 L487.4 598.3 M511 558.7 L540.2 586 M525 573.8 L503.4 613.4 M419.4 622.8 L454.3 595.5"/>
<path d="M574 558.7 L604.3 547.4 M572.3 572.8 L610 615 L628 635 M555.3 600 L591 634 M570.4 615 L561 628.5 M620 630 L637.5 605"/>
<path d="M579 480 L674 635" stroke-width=".6"/>
<path d="M617.5 522.5 L680 625 L686 635"/>
<path d="M580 504 L620 570 L652.5 625 L658 635"/>





</g>
<!-- green dashed lines -->
<g stroke="#3f6428" stroke-width="1.4" fill="none" stroke-dasharray="2.8 1.5" opacity=".92">
<path d="M530 299 V386 M533.6 299 V387"/>
<path d="M610 299 V440 M623.7 299 V445"/>
<path d="M559 427.5 L610 440 M623.7 445 L690 467.5 L703 472"/>
<path d="M520 370 L557.5 427.5 L582.5 470"/>
<path d="M471.7 415.8 L528 424 L575 496.7"/>
<path d="M533 388 L560 430 L590 480 L615 519 L703 539"/>
<path d="M545 450 L580 504"/>
<path d="M560 474 L580 480"/>
<path d="M435.5 479.4 L480.8 478.5 L561 503 L579 505"/>
<path d="M435.5 479.4 Q434.500 500 437.4 517 Q444 546 455 570 Q468 588 485.5 602 Q502 617 517.5 628.6 L523 626.7 L555.3 568"/>
<path d="M421 525 Q424 545 429 560.6 Q439 580 453.4 594.6 Q462 608 466.6 621 L469.5 635"/>
<path d="M561 503 V551 M565 504 V551"/>
<circle cx="564.8" cy="560.6" r="9.500"/>
<path d="M572 572 L540 626.7 L535 635"/>







</g>
<g stroke="#46702c" stroke-width="1.3" fill="none"><path d="M540 439 H564 M690 467 V435 H703"/></g>
<g fill="#3f7a2c"><circle cx="558" cy="448" r="2.2"/><circle cx="542" cy="538" r="2.6"/><circle cx="596" cy="569.5" r="2.6"/></g>
<rect x="517" y="632" width="14" height="4" fill="#222"/>
<!-- attribution -->
<rect x="598" y="629" width="105" height="6" fill="#fff" opacity=".55"/>
<text x="600" y="634" font-size="4.4" fill="#444" font-family="Liberation Sans, sans-serif" textLength="102" lengthAdjust="spacingAndGlyphs">County of DuPage, Esri Canada, Esri, HERE, Garmin, INCR</text>
<rect x="243" y="622" width="44" height="4" fill="#c8c0b0" opacity=".5"/>
<text x="243" y="633.5" font-size="3.6" fill="#ddd" font-family="Liberation Sans, sans-serif">-88.118 41.826 Degrees</text>

</g>
<!-- header bar -->
<rect x="240" y="285" width="570" height="14" fill="#1f3560"/>
<rect x="240" y="285" width="192" height="14" fill="url(#hdl)"/><rect x="432" y="285" width="181" height="14" fill="url(#sky)"/>
<g filter="url(#b1)"><rect x="480" y="291" width="34" height="5" fill="#b07a55"/><rect x="512" y="288.5" width="16" height="8" fill="#7c5a42"/><rect x="528" y="291" width="40" height="5" fill="#a9805e"/><rect x="575" y="292" width="30" height="4" fill="#7a6a50"/><rect x="432" y="294.5" width="181" height="4.5" fill="#2f3424" opacity=".8"/><rect x="434" y="288" width="8" height="9" fill="#26301f"/></g>
<g stroke="#7a8296" stroke-width=".5" fill="none" opacity=".8"><path d="M300 286 L330 298 M320 286 Q340 296 370 290 M350 286 V298 M380 286 V298 M395 286 V298 M410 286 V298 M300 292 H430 M590 288 Q610 296 640 290 M600 286 V298 M620 286 V298 M660 286 L670 298 M690 286 V298"/></g>
<circle cx="248.5" cy="292" r="4.2" fill="#e8e4d8" stroke="#333" stroke-width=".8"/><circle cx="248.5" cy="292" r="2" fill="#555"/>
<text x="256" y="297.4" font-size="10" font-weight="bold" font-style="italic" fill="#f4f4f4" font-family="Liberation Sans, sans-serif" textLength="36.5" lengthAdjust="spacingAndGlyphs">Parcel Viewer</text>
<line x1="240" y1="299.3" x2="810" y2="299.3" stroke="#cfcab8" stroke-width=".8" opacity=".8"/>
<!-- header tool icons -->
<g fill="#cfd4de" opacity=".85"><rect x="742" y="288" width="7" height="1.2"/><rect x="742" y="291" width="7" height="1.2"/><rect x="742" y="294" width="7" height="1.2"/><path d="M756 288 l4 -1.5 l4 1.5 l-4 1.5z M756 291 l4 1.5 l4 -1.5 M756 294 l4 1.5 l4 -1.5" stroke="#dfe3ea" stroke-width=".9"/><rect x="767" y="287.5" width="5" height="9" rx="1"/><circle cx="780.5" cy="292" r="4"/><rect x="788" y="289" width="8" height="6" rx="1"/><rect x="789.5" y="287" width="5" height="3"/><rect x="800" y="287.5" width="7.5" height="9"/></g>
<g fill="#1f3560"><circle cx="780.5" cy="292" r="1.6"/><rect x="801.5" y="289" width="4.5" height="1.2"/><rect x="801.5" y="292" width="4.5" height="2.4"/></g>
<!-- search -->
<rect x="256" y="302.5" width="82" height="12.5" fill="#fff"/>
<rect x="256" y="302.5" width="10" height="12.5" fill="#f2f2f2"/><path d="M259 307.5 h4.4 l-2.2 2.6z" fill="#333"/>
<rect x="327.5" y="302.5" width="10.5" height="12.5" fill="#f2f2f2"/><circle cx="332" cy="308" r="2.2" fill="none" stroke="#444" stroke-width="1"/><path d="M333.6 309.8 L336 312.6" stroke="#444" stroke-width="1.2"/>
<text x="269.6" y="311" font-size="6.4" fill="#6a6a6a" font-style="italic" font-weight="bold" font-family="Liberation Sans, sans-serif" textLength="40.6" lengthAdjust="spacingAndGlyphs">Find address or place</text>
<!-- zoom buttons -->
<g fill="#27313f" opacity=".72"><rect x="243.5" y="301.5" width="8" height="24"/><rect x="243.5" y="331" width="8" height="11"/><rect x="243.5" y="344" width="8" height="11"/></g>
<g stroke="#fff" stroke-width="1" fill="none"><path d="M245.5 307.5 h4 M247.5 305.5 v4 M245.5 319.5 h4" /><circle cx="247.5" cy="349.5" r="2.4"/></g>
<path d="M244.8 337 l2.7 -2.8 l2.7 2.8 v2.8 h-5.4z" fill="#fff"/>
<!-- tool buttons -->
<g fill="#3f4a5e" opacity=".6"><rect x="255" y="317.5" width="13" height="13.5"/><rect x="270" y="317.5" width="13" height="13.5"/><rect x="285" y="317.5" width="13" height="13.5"/><rect x="300" y="317.5" width="13" height="13.5"/><rect x="315.5" y="317.5" width="13" height="13.5"/></g>
<g fill="#cfd8e4" opacity=".85"><circle cx="261.5" cy="324.5" r="2.8"/><circle cx="276.5" cy="324.5" r="2.8"/><circle cx="291.5" cy="324.5" r="2.6"/><path d="M304 328 l5 -7 l2 1.5 l-5 7z"/><circle cx="322" cy="324.5" r="2.8"/></g>
<!-- legend panel -->
<rect x="703" y="300" width="107" height="335" fill="#fefefe"/>
<rect x="703" y="300" width="107" height="2.2" fill="#c9a24a"/><rect x="702.6" y="300" width="1" height="335" fill="#c9a24a" opacity=".8"/>
<rect x="703.5" y="302.2" width="105.5" height="13" fill="#1f3560"/>
<text x="706" y="312" font-size="6.4" font-weight="bold" fill="#fff" font-family="Liberation Sans, sans-serif" textLength="17" lengthAdjust="spacingAndGlyphs">Legend</text>
<path d="M791.5 310.5 l1.5 -3 l1.5 3 M793 307 v-1.5" stroke="#fff" stroke-width=".9" fill="none"/><path d="M802.5 307.5 l2.5 2.8 m0 -2.8 l-2.5 2.8" stroke="#fff" stroke-width=".9"/>
<g font-family="Liberation Sans, sans-serif" fill="#2a2a48" font-weight="bold">
<text x="704" y="322" font-size="5.4" textLength="61" lengthAdjust="spacingAndGlyphs">DuPageAssessmentParcelViewer</text>
<text x="704" y="330.6" font-size="4.6" font-weight="normal" fill="#333" textLength="21" lengthAdjust="spacingAndGlyphs">Parcel Grade</text>
<text x="707" y="340" font-size="4.4" fill="#222">&#8226; &#8226;</text>
<text x="704" y="348.8" font-size="4.6" font-weight="normal" fill="#333" textLength="32" lengthAdjust="spacingAndGlyphs">Corporate Boundaries</text>
<text x="704" y="366.4" font-size="4.6" font-weight="normal" fill="#333" textLength="33" lengthAdjust="spacingAndGlyphs">Subdivision Lot Lines</text>
<text x="704" y="391.4" font-size="5.4" textLength="53.5" lengthAdjust="spacingAndGlyphs">Unincorporated Zoning Data</text>
<text x="704" y="400.4" font-size="4.6" font-weight="normal" fill="#333" textLength="22" lengthAdjust="spacingAndGlyphs">Unincorp_Zoning</text>
</g>
<rect x="706" y="351.2" width="4.6" height="6.4" fill="#fff" stroke="#b83040" stroke-width="1"/>
<path d="M706 372.5 h4.4" stroke="#444" stroke-width=".8"/>
<g font-family="Liberation Sans, sans-serif" font-weight="bold" fill="#26264a" font-size="5.4">
<rect x="705" y="403.2" width="6" height="6.6" fill="#f8f0cf"/><text x="714" y="408.4" textLength="27.5" lengthAdjust="spacingAndGlyphs">R-1 Single Family</text>
<rect x="705" y="411.9" width="6" height="6.6" fill="#f4e37e"/><text x="714" y="417.1" textLength="27.5" lengthAdjust="spacingAndGlyphs">R-2 Single Family</text>
<rect x="705" y="420.9" width="6" height="6.6" fill="#eab94c"/><text x="714" y="426.1" textLength="27.5" lengthAdjust="spacingAndGlyphs">R-3 Single Family</text>
<rect x="705" y="430.1" width="6" height="6.6" fill="#db8a3e"/><text x="714" y="435.3" textLength="27.5" lengthAdjust="spacingAndGlyphs">R-4 Single Family</text>
<rect x="705" y="439.1" width="6" height="6.6" fill="#c8a480"/><text x="714" y="444.3" textLength="31" lengthAdjust="spacingAndGlyphs">R-5 Multiple Family</text>
<rect x="705" y="448.0" width="6" height="6.6" fill="#6b6a34"/><text x="714" y="453.2" textLength="31" lengthAdjust="spacingAndGlyphs">R-6 Multiple Family</text>
<rect x="705" y="456.9" width="6" height="6.6" fill="#5c5c36"/><text x="714" y="462.1" textLength="31" lengthAdjust="spacingAndGlyphs">R-7 Multiple Family</text>
<rect x="705" y="465.9" width="6" height="6.6" fill="#f2bab2"/><text x="714" y="471.1" textLength="29.7" lengthAdjust="spacingAndGlyphs">B-1 Local Business</text>
<rect x="705" y="474.7" width="6" height="6.6" fill="#cb3a2c"/><text x="714" y="479.9" textLength="29.7" lengthAdjust="spacingAndGlyphs">B-2 Local Business</text>
<rect x="705" y="483.7" width="6" height="6.6" fill="#3b6a9c"/><text x="714" y="488.9" textLength="14" lengthAdjust="spacingAndGlyphs">O Office</text>
<rect x="705" y="492.7" width="6" height="6.6" fill="#a9c9e2"/><text x="714" y="497.9" textLength="28.5" lengthAdjust="spacingAndGlyphs">O Office Research</text>
<rect x="705" y="501.7" width="6" height="6.6" fill="#d9a2ce"/><text x="714" y="506.9" textLength="28.5" lengthAdjust="spacingAndGlyphs">I-1 Light Industrial</text>
<rect x="705" y="510.7" width="6" height="6.6" fill="#5a1c4c"/><text x="714" y="515.9" textLength="34" lengthAdjust="spacingAndGlyphs">I-2 General Industrial</text>
</g>

<!-- right border -->
<rect x="809" y="300" width="1.5" height="242" fill="#d9a24a"/>
<rect x="809" y="542" width="1.5" height="93" fill="#c86aa0"/>

</svg>

<!-- scrollbar -->
<div class="a" style="left:985px;top:233px;width:11px;height:524px;background:#f1f1f1"></div>
<div class="a" style="left:996px;top:233px;width:8px;height:524px;background:#e9e9e9"></div>
<div class="a" style="left:986px;top:388px;width:9px;height:47px;background:#c9c9c9"></div>
<svg style="left:987px;top:240px" width="8" height="6" viewBox="0 0 8 6"><path d="M1 5 L4 1.5 L7 5" stroke="#333" stroke-width="1.4" fill="none"/></svg>
<svg style="left:986.5px;top:748.5px" width="8" height="6" viewBox="0 0 8 6"><path d="M1.5 1 L4 3.5 L6.5 1" stroke="#333" stroke-width="1.2" fill="none"/></svg>
<svg style="left:997px;top:491px" width="5" height="8" viewBox="0 0 5 8"><path d="M0 0 L4 4 L0 8Z" fill="#555"/></svg>
<!-- right panel -->
<div class="a" style="left:1004px;top:233px;width:143px;height:524px;background:#fafafa"></div>
<div class="a" style="left:1013px;top:243px;width:125px;height:22px;background:#fff;border:1px solid #ccc;border-bottom-color:#aaa"></div>
<div class="t" style="left:1022px;top:249px;font-size:8.8px;color:#999">Find your tools here</div>
<svg style="left:1019px;top:280.1px" width="15" height="15" viewBox="0 0 15 15" fill="none" stroke="#d2444a" stroke-width="1"><path d="M3.5 1.5 H9.5 L12.5 4.5 V13.5 H3.5 V7" fill="#f6d8d6"/><rect x="1.5" y="2.5" width="5" height="4.5" fill="#d2444a" stroke="none"/><path d="M9.5 1.5 V4.5 H12.5" /></svg>
<div class="t" style="left:1040.5px;top:282.6px;font-size:9.3px;color:#444">Create PDF</div>
<svg style="left:1019px;top:308.9px" width="15" height="15" viewBox="0 0 15 15" fill="none" stroke="#d977c8" stroke-width="1"><rect x="1.5" y="2" width="12" height="4.5" fill="#f3d3ee"/><rect x="1.5" y="9" width="5" height="4.5"/><path d="M9 9.5 H13.5 M9 11.3 H13.5 M9 13.2 H13.5" stroke-width=".8"/></svg>
<div class="t" style="left:1040.5px;top:311.4px;font-size:9.3px;color:#444">Edit PDF</div>
<svg style="left:1019px;top:337.7px" width="15" height="15" viewBox="0 0 15 15" fill="none" stroke="#2f9b7e" stroke-width="1"><path d="M8.5 13.5 H2.5 V1.5 H8 L11 4.5 V8" /><path d="M8 1.5 V4.5 H11" /><path d="M7 11.5 H13 M11 9.3 L13.2 11.5 L11 13.7" stroke-width="1.3"/></svg>
<div class="t" style="left:1040.5px;top:340.2px;font-size:9.3px;color:#444">Export PDF</div>
<svg style="left:1019px;top:366.5px" width="15" height="15" viewBox="0 0 15 15" fill="none" stroke="#e8b93a" stroke-width="1"><path d="M8 2 Q14.5 2 14.5 6.8 Q14.5 11 8.2 11.2 Q6.4 11.2 5.2 10.8 L2.2 13.6 L2.9 9.9 Q1.2 8.6 1.2 6.7 Q1.2 2 8 2Z" fill="#fbf0cf"/></svg>
<div class="t" style="left:1040.5px;top:369.0px;font-size:9.3px;color:#444">Comment</div>
<svg style="left:1019px;top:395.3px" width="15" height="15" viewBox="0 0 15 15" fill="none" stroke="#58b6c9" stroke-width="1"><rect x="1.5" y="2" width="5" height="3.5" fill="#58b6c9" stroke="none" opacity=".6"/><rect x="1.5" y="6.5" width="5" height="7" stroke-dasharray="1.2 1" stroke-width=".9"/><rect x="8.5" y="2" width="5" height="11.5" fill="#d9f0f5"/></svg>
<div class="t" style="left:1040.5px;top:397.8px;font-size:9.3px;color:#444">Organize Pages</div>
<svg style="left:1019px;top:424.1px" width="15" height="15" viewBox="0 0 15 15" fill="none" stroke="#3f8fd0" stroke-width="1"><rect x="1.5" y="5.5" width="12" height="5.5" rx="1" fill="#3f8fd0" stroke="none"/><rect x="4" y="9" width="7" height="4.5" fill="#fafafa"/><path d="M4.5 5 V2.5 H10.5 V5 M7.5 1 V4 M6 2.5 H9" stroke-width=".9"/></svg>
<div class="t" style="left:1040.5px;top:426.6px;font-size:9.3px;color:#444">Enhance Scans</div>
<svg style="left:1019px;top:452.9px" width="15" height="15" viewBox="0 0 15 15" fill="none" stroke="#4a86c9" stroke-width="1"><path d="M7.5 1.5 Q10 3 13 3 V7.5 Q13 11.5 7.5 14 Q2 11.5 2 7.5 V3 Q5 3 7.5 1.5Z" stroke-width="1.3"/><path d="M7.5 3.3 Q9.5 4.3 11.3 4.4 V7.5 Q11.3 10.5 7.5 12.2Z" fill="#d5e5f6" stroke="none"/></svg>
<div class="t" style="left:1040.5px;top:455.4px;font-size:9.3px;color:#444">Protect</div>
<svg style="left:1019px;top:481.7px" width="15" height="15" viewBox="0 0 15 15" fill="none" stroke="#7a63c9" stroke-width="1"><path d="M1.5 12.5 Q3 8 6 5 Q8.5 2.5 9.7 3.7 Q10.8 5 8.5 7.5 Q6 10.5 3 11.5 Q5 12.5 7 11.5 Q9.5 10 10.5 11.5 Q11.5 13 14 12.3" stroke-width="1.2"/></svg>
<div class="t" style="left:1040.5px;top:484.2px;font-size:9.3px;color:#444">Fill &amp; Sign</div>
<svg style="left:1019px;top:510.5px" width="15" height="15" viewBox="0 0 15 15" fill="none" stroke="#b0509c" stroke-width="1"><path d="M2.5 1.5 H9 L12.5 5 V13.5 H2.5Z" fill="#b0509c"/><path d="M9 1.5 V5 H12.5" stroke="#fafafa" stroke-width=".8"/><rect x="4.5" y="8.5" width="6" height="3" fill="#fafafa" stroke="none"/></svg>
<div class="t" style="left:1040.5px;top:513.0px;font-size:9.3px;color:#444">Prepare Form</div>
<svg style="left:1019px;top:539.3px" width="15" height="15" viewBox="0 0 15 15" fill="none" stroke="#dd72c4" stroke-width="1"><rect x="1" y="3" width="13.5" height="10" fill="#dd72c4" stroke="none"/><path d="M3 5.5 H6.5 V8 H3 M9 5.5 H12.5 M9 8 H12.5 M3 10.5 H6.5 M7.7 2 V14" stroke="#fafafa" stroke-width="1"/></svg>
<div class="t" style="left:1040.5px;top:541.8px;font-size:9.3px;color:#444">Compare Files</div>
<svg style="left:1019px;top:568.1px" width="15" height="15" viewBox="0 0 15 15" fill="none" stroke="#555" stroke-width="1"><circle cx="7.5" cy="7.5" r="5.6" stroke-width="1.1"/><path d="M4.8 7.5 H10.2 M7.5 4.8 V10.2" stroke-width="1.1"/></svg>
<div class="t" style="left:1040.5px;top:570.6px;font-size:9.3px;color:#444">More Tools</div>

<div class="t" style="left:1004px;top:710px;width:143px;text-align:center;font-size:8.1px;font-weight:bold;color:#444;white-space:normal;line-height:9.5px">Your current plan is Creative<br>Cloud</div>
<div class="t" style="left:1004px;top:735px;width:143px;text-align:center;font-size:7.2px;color:#2a62c8">Learn More</div>
<!-- TASKBAR -->
<div class="a" id="task" style="left:0;top:762px;width:1200px;height:25px;background:#1d2b40"></div>
<div class="a" style="left:0;top:762px;width:30px;height:25px;background:#1f3242"></div>
<svg style="left:10px;top:769px" width="11" height="11" viewBox="0 0 11 11" fill="#fff"><path d="M0 1.5 L4.8 .8 V5.1 H0Z M5.6 .7 L11 0 V5.1 H5.6Z M0 5.9 H4.8 V10.2 L0 9.5Z M5.6 5.9 H11 V11 L5.6 10.3Z"/></svg>
<div class="a" style="left:30px;top:762px;width:215px;height:25px;background:#f1f1f1;border-bottom:1px solid #d0d0d0"></div>
<svg style="left:36px;top:768px" width="12" height="12" viewBox="0 0 12 12" fill="none" stroke="#333" stroke-width="1.1"><circle cx="7.3" cy="4.7" r="3.2"/><path d="M5 7.2 L1.2 11"/></svg>
<div class="t" style="left:54.5px;top:770px;font-size:9px;color:#444">Type here to search</div>
<svg style="left:254px;top:768.5px" width="11" height="11" viewBox="0 0 11 11"><circle cx="5.5" cy="5.5" r="4" fill="none" stroke="#fff" stroke-width="1.5"/></svg>
<svg style="left:284px;top:769px" width="12" height="10" viewBox="0 0 12 10" fill="none" stroke="#fff" stroke-width="1.1"><path d="M1 2.5 H8 M1 7.5 H8 M10.5 1 V3 M10.5 5 V9"/></svg>
<div class="a" style="left:705px;top:762px;width:30px;height:25px;background:#4b586b"></div>
<svg style="left:313.0px;top:766px" width="16" height="16" viewBox="0 0 16 16"><path d="M1 3 H6 L7.5 4.5 H15 V13 H1Z" fill="#f5c64a"/><path d="M1 6 H15 V13 H1Z" fill="#fbd96a"/><rect x="4.5" y="9" width="7" height="4" fill="#4aa0e0"/></svg>
<div class="a" style="left:308.5px;top:785.5px;width:25px;height:1.5px;background:#8fa6c8"></div>
<svg style="left:344.0px;top:766px" width="16" height="16" viewBox="0 0 16 16"><rect x="1.5" y="1.5" width="13" height="13" fill="#fbd017"/><path d="M9.5 14.5 L14.5 9.5 V14.5Z" fill="#3a3a3a"/></svg>
<div class="a" style="left:339.5px;top:785.5px;width:25px;height:1.5px;background:#8fa6c8"></div>
<svg style="left:374.5px;top:766px" width="16" height="16" viewBox="0 0 16 16"><rect x="6" y="1.5" width="9" height="9" fill="#1a8ad4"/><rect x="8" y="3" width="3" height="3" fill="#5ab5ec"/><rect x="11.2" y="3" width="3" height="3" fill="#8fd0f5"/><rect x="1" y="3.5" width="7.5" height="7.5" rx="1" fill="#0a64b4"/><circle cx="4.7" cy="7.2" r="2" fill="none" stroke="#fff" stroke-width="1.2"/><rect x="7.5" y="9" width="8" height="6" fill="#f0a848"/><path d="M7.5 9 L11.5 12.5 L15.5 9" stroke="#fff" stroke-width=".8" fill="none"/></svg>
<div class="a" style="left:370.0px;top:785.5px;width:25px;height:1.5px;background:#8fa6c8"></div>
<svg style="left:405.0px;top:766px" width="16" height="16" viewBox="0 0 16 16"><rect x="1" y="1.5" width="14" height="13" rx="4" fill="#4a8cf7"/><rect x="3.5" y="5.5" width="6" height="5" rx="1" fill="#fff"/><path d="M10 7.5 L12.8 5.6 V10.4 L10 8.5Z" fill="#fff"/></svg>
<div class="a" style="left:400.5px;top:785.5px;width:25px;height:1.5px;background:#8fa6c8"></div>
<svg style="left:435.8px;top:766px" width="16" height="16" viewBox="0 0 16 16"><rect x="1.5" y="1.5" width="13" height="13" rx="1.5" fill="#0a6cc4"/><rect x="3.7" y="3.7" width="3.4" height="8" rx=".6" fill="#fff"/><rect x="8.9" y="3.7" width="3.4" height="5" rx=".6" fill="#fff"/></svg>
<div class="a" style="left:431.3px;top:785.5px;width:25px;height:1.5px;background:#8fa6c8"></div>
<svg style="left:466.0px;top:766px" width="16" height="16" viewBox="0 0 16 16"><circle cx="8" cy="8" r="7" fill="#e9e9e9"/><path d="M8 8 L1.94 4.5 A7 7 0 0 1 14.06 4.5Z" fill="#ea4335"/><path d="M8 8 L14.06 4.5 A7 7 0 0 1 8 15Z" fill="#fbbc04"/><path d="M8 8 L8 15 A7 7 0 0 1 1.94 4.5Z" fill="#34a853"/><circle cx="8" cy="8" r="3.2" fill="#fff"/><circle cx="8" cy="8" r="2.5" fill="#4285f4"/></svg>
<div class="a" style="left:461.5px;top:785.5px;width:25px;height:1.5px;background:#8fa6c8"></div>
<svg style="left:497.0px;top:766px" width="16" height="16" viewBox="0 0 16 16"><circle cx="8" cy="8" r="7.3" fill="#fff"/><rect x="4" y="6.6" width="4.2" height="1.7" rx=".85" fill="#36c5f0"/><rect x="6.6" y="3.6" width="1.7" height="4.2" rx=".85" fill="#36c5f0"/><rect x="8.7" y="3.8" width="1.7" height="4.2" rx=".85" fill="#2eb67d"/><rect x="8.2" y="6.6" width="4.2" height="1.7" rx=".85" fill="#2eb67d"/><rect x="7.8" y="8.8" width="4.2" height="1.7" rx=".85" fill="#ecb22e"/><rect x="7.8" y="8.4" width="1.7" height="4.2" rx=".85" fill="#ecb22e"/><rect x="5.6" y="8.2" width="1.7" height="4.2" rx=".85" fill="#e01e5a"/><rect x="3.6" y="8.7" width="4.2" height="1.7" rx=".85" fill="#e01e5a"/></svg>
<div class="a" style="left:492.5px;top:785.5px;width:25px;height:1.5px;background:#8fa6c8"></div>
<svg style="left:527.5px;top:766px" width="16" height="16" viewBox="0 0 16 16"><circle cx="8" cy="8" r="7.3" fill="#1ed760"/><path d="M4 6 Q8 4.8 12.2 6.8 M4.5 8.4 Q8 7.4 11.5 9 M5 10.6 Q8 9.8 10.8 11.1" stroke="#1d2b40" stroke-width="1.3" fill="none" stroke-linecap="round"/></svg>
<div class="a" style="left:523.0px;top:785.5px;width:25px;height:1.5px;background:#8fa6c8"></div>
<svg style="left:558.0px;top:766px" width="16" height="16" viewBox="0 0 16 16"><circle cx="8" cy="8" r="4.2" fill="none" stroke="#fff" stroke-width="2.2"/><g stroke="#fff" stroke-width="2"><path d="M8 1.2 V3.4 M8 12.6 V14.8 M1.2 8 H3.4 M12.6 8 H14.8 M3.2 3.2 L4.8 4.8 M11.2 11.2 L12.8 12.8 M3.2 12.8 L4.8 11.2 M11.2 4.8 L12.8 3.2"/></g></svg>
<div class="a" style="left:553.5px;top:785.5px;width:25px;height:1.5px;background:#8fa6c8"></div>
<svg style="left:589.0px;top:766px" width="16" height="16" viewBox="0 0 16 16"><rect x="5" y="2" width="10" height="12" rx="1" fill="#2b7cd3"/><rect x="5" y="8" width="10" height="6" fill="#185abd"/><rect x="1" y="4.2" width="8" height="8" rx=".8" fill="#1752b0"/><text x="5" y="10.8" font-size="6" font-weight="bold" fill="#fff" text-anchor="middle" font-family="Liberation Sans, sans-serif">W</text></svg>
<div class="a" style="left:584.5px;top:785.5px;width:25px;height:1.5px;background:#8fa6c8"></div>
<svg style="left:619.5px;top:766px" width="16" height="16" viewBox="0 0 16 16"><circle cx="8" cy="8" r="6.2" fill="#2a2a38" stroke="#e87a6a" stroke-width="1.6"/><path d="M8 1.8 A6.2 6.2 0 0 1 14.2 8" stroke="#e84aa0" stroke-width="1.6" fill="none"/><circle cx="8" cy="8" r="2.2" fill="#fff"/></svg>
<div class="a" style="left:615.0px;top:785.5px;width:25px;height:1.5px;background:#8fa6c8"></div>
<svg style="left:650.0px;top:766px" width="16" height="16" viewBox="0 0 16 16"><rect x="1" y="1.5" width="14" height="13" rx="4" fill="#4a8cf7"/><rect x="3.5" y="5.5" width="6" height="5" rx="1" fill="#fff"/><path d="M10 7.5 L12.8 5.6 V10.4 L10 8.5Z" fill="#fff"/></svg>
<div class="a" style="left:645.5px;top:785.5px;width:25px;height:1.5px;background:#8fa6c8"></div>
<svg style="left:680.8px;top:766px" width="16" height="16" viewBox="0 0 16 16"><circle cx="8" cy="8" r="7" fill="#1b9de2"/><path d="M1.2 9 Q2 3 8 2 Q13 2.4 14.6 7 Q12 4.2 8.2 5.2 Q5 6.6 5.6 10.4 Q6.6 14 11.6 13.2 Q6 16.4 2 11.8Z" fill="#35c1a0"/><path d="M5.6 10.4 Q5.8 7.2 9.4 6.8 Q12.4 7 13 9 H8.4 Q8 11.6 10.8 12.8 Q6.6 14 5.6 10.4Z" fill="#0c59a4"/></svg>
<div class="a" style="left:676.3px;top:785.5px;width:25px;height:1.5px;background:#8fa6c8"></div>
<svg style="left:711.5px;top:766px" width="16" height="16" viewBox="0 0 16 16"><rect x="1.5" y="1.5" width="13" height="13" fill="#1a0a08" stroke="#d8232a" stroke-width="1.2"/><path d="M4 11.5 Q7 8 7.8 4.5 Q8.3 3.5 8.6 4.8 Q9 7.5 12 10 Q8 9.6 4 11.5Z" stroke="#fff" stroke-width=".8" fill="none"/></svg>
<div class="a" style="left:707.0px;top:785.5px;width:25px;height:1.5px;background:#8fa6c8"></div>

<!-- tray -->
<svg style="left:1068px;top:767px" width="64" height="16" viewBox="1068 767 64 16" fill="none" stroke="#fff" stroke-width="1"><path d="M1070.5 776.5 L1074 773 L1077.500 776.5"/><path d="M1084 778 Q1081.800 778 1082 775.800 Q1082.400 774.200 1084.200 774.400 Q1085.500 771.600 1088.500 772.400 Q1090.800 773 1091 775 Q1093.800 775 1093.800 776.600 Q1093.600 778 1092 778Z" fill="#2a8fe8" stroke="#2a8fe8" stroke-width=".6"/><rect x="1100" y="770.5" width="9" height="7"/><path d="M1102 779.500 H1107 M1099.500 774 H1097.800 V780 H1101" stroke-width=".9"/><path d="M1113.500 773.500 H1115.500 L1118 771 V779 L1115.500 776.500 H1113.500Z" stroke-width=".9"/><path d="M1119.800 773 Q1121 775 1119.800 777 M1121.600 771.600 Q1123.600 775 1121.600 778.400" stroke-width=".8"/></svg>
<div class="t" style="left:1120px;top:764.5px;width:52px;text-align:center;font-size:7.4px;color:#fff">11:39 AM</div>
<div class="t" style="left:1120px;top:775.5px;width:52px;text-align:center;font-size:7.4px;color:#fff">6/17/2021</div>
<svg style="left:1173px;top:769px" width="12" height="12" viewBox="0 0 12 12" fill="none" stroke="#fff" stroke-width="1"><path d="M1 1 H11 V8.5 H7.5 L5.8 10.5 L4.2 8.5 H1Z"/></svg>
<div class="a" style="left:1196px;top:764px;width:1px;height:21px;background:#7a8494"></div>
</div></body></html>
